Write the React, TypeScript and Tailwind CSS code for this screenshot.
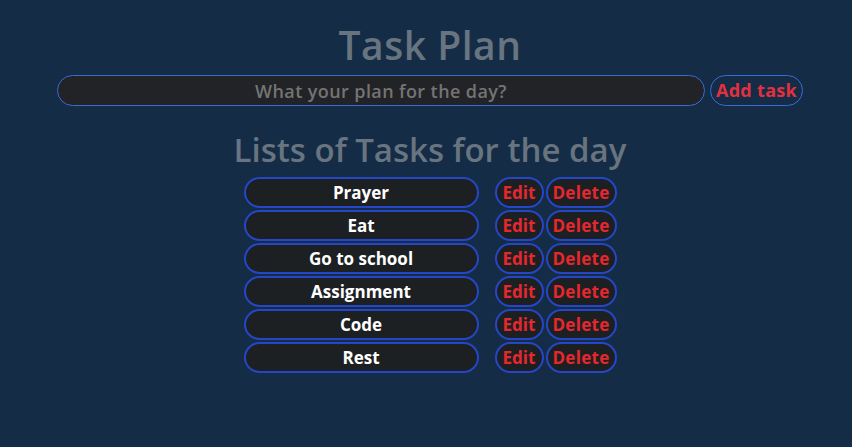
import React from "react";

const tasks = ["Prayer", "Eat", "Go to school", "Assignment", "Code", "Rest"];

export default function App() {
  return (
    <div
      className="min-h-[447px] w-full bg-[#142c46] pl-[8px] pt-[22px]"
      style={{ fontFamily: '"Open Sans", "Noto Sans", sans-serif' }}
    >
      <h1 className="text-center text-[39px] font-semibold leading-[46px] text-[#68747f] tracking-[0.5px]">
        Task Plan
      </h1>
      <div className="mt-[7px] flex justify-center gap-[5px]">
        <input
          placeholder="What your plan for the day?"
          className="h-[31px] w-[648px] rounded-full border border-[#3a6ad6] bg-[#222327] text-center text-[18px] font-semibold tracking-[0.4px] text-[#777] outline-none placeholder:text-[#747474]"
        />
        <button className="h-[31px] w-[93px] rounded-full border border-[#3a6ad6] bg-transparent text-[18px] font-bold tracking-[0.3px] text-[#e2303f]">
          Add task
        </button>
      </div>
      <h2 className="mt-[24px] text-center text-[33px] font-semibold leading-[40px] text-[#68747f]">
        Lists of Tasks for the day
      </h2>
      <div className="mt-[7px] flex flex-col items-center gap-[2px]">
        {tasks.map((t) => (
          <div key={t} className="flex items-center">
            <div className="flex h-[31px] w-[235px] items-center justify-center rounded-full border-2 border-[#2546c6] bg-[#1d2022] text-[17px] font-bold text-white">
              {t}
            </div>
            <button className="ml-[16px] h-[31px] w-[49px] rounded-full border-2 border-[#2546c6] bg-[#1d2022] text-[17px] font-bold text-[#e5282f]">
              Edit
            </button>
            <button className="ml-[2px] h-[31px] w-[71px] rounded-full border-2 border-[#2546c6] bg-[#1d2022] text-[17px] font-bold tracking-[0.3px] text-[#e5282f]">
              Delete
            </button>
          </div>
        ))}
      </div>
    </div>
  );
}
